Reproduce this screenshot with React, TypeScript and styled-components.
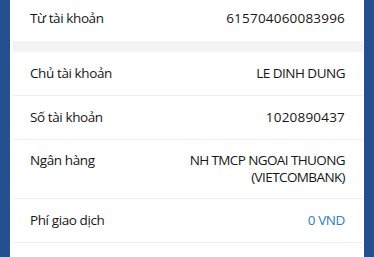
import React from "react";
import styled, { createGlobalStyle } from "styled-components";

const Global = createGlobalStyle`
  html, body { margin: 0; padding: 0; background: #23518f; }
  body { font-family: "Open Sans", "Noto Sans", sans-serif; }
`;

const Page = styled.div`
  width: 374px;
  height: 257px;
  overflow: hidden;
  background: #23518f;
  display: flex;
  justify-content: center;
`;

const Sheet = styled.div`
  width: 354px;
  height: 100%;
  background: #ffffff;
  padding: 0 1px 0 3px;
  box-sizing: border-box;
  overflow: hidden;
`;

const List = styled.div`
  margin-top: -3px;
  display: flex;
  flex-direction: column;
`;

const Row = styled.div<{ $last?: boolean }>`
  display: flex;
  justify-content: space-between;
  align-items: center;
  min-height: 44px;
  box-sizing: border-box;
  padding: 12px 18px 12px 17px;
  border-bottom: 1px solid ${(p) => (p.$last ? "transparent" : "#efefef")};
`;

const Band = styled.div`
  height: 11px;
  background: #f3f3f3;
`;

const Label = styled.div<{ $top?: boolean }>`
  font-size: 13.5px;
  line-height: 17px;
  letter-spacing: -0.4px;
  color: #161616;
  align-self: ${(p) => (p.$top ? "flex-start" : "center")};
  white-space: nowrap;
`;

const Value = styled.div<{ $accent?: boolean; $spacing?: number }>`
  font-size: 13.5px;
  line-height: 17px;
  letter-spacing: ${(p) => p.$spacing ?? 0}px;
  color: ${(p) => (p.$accent ? "#2f7cc0" : "#161616")};
  text-align: right;
`;

export default function App() {
  return (
    <>
      <Global />
      <Page>
        <Sheet>
          <List>
            <Row $last>
              <Label>Từ tài khoản</Label>
              <Value $spacing={0.2}>615704060083996</Value>
            </Row>
            <Band />
            <Row>
              <Label>Chủ tài khoản</Label>
              <Value $spacing={-0.5}>LE DINH DUNG</Value>
            </Row>
            <Row>
              <Label>Số tài khoản</Label>
              <Value $spacing={0.2}>1020890437</Value>
            </Row>
            <Row>
              <Label $top>Ngân hàng</Label>
              <Value $spacing={-0.6}>
                NH TMCP NGOAI THUONG
                <br />
                (VIETCOMBANK)
              </Value>
            </Row>
            <Row>
              <Label>Phí giao dịch</Label>
              <Value $accent $spacing={-0.4}>0 VND</Value>
            </Row>
          </List>
        </Sheet>
      </Page>
    </>
  );
}
